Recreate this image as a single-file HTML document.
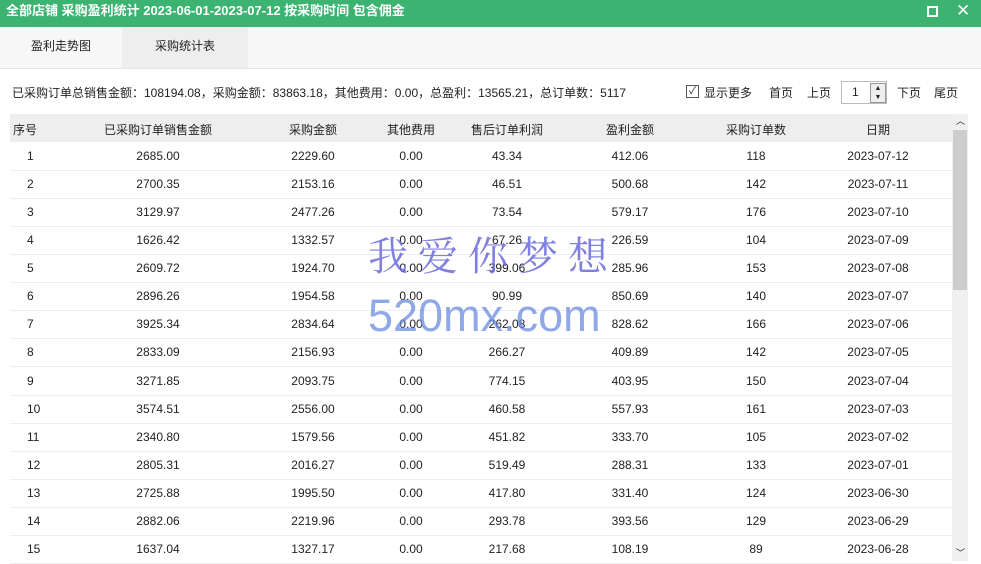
<!DOCTYPE html>
<html><head><meta charset="utf-8"><style>
body{margin:0;width:981px;height:561px;overflow:hidden;background:#fff;font-family:"Liberation Sans","Noto Sans CJK SC",sans-serif;font-size:12px;color:#222;position:relative}
.title{position:absolute;left:0;top:0;width:981px;height:27px;background:#3cb371;color:#fff;font-weight:bold;font-size:13px;line-height:22px}
.title span{position:absolute;left:6px;top:0}
.tabs{position:absolute;left:0;top:27px;width:981px;height:41px;background:#f7f7f7;border-bottom:1px solid #e4e4e4}
.tab{position:absolute;top:0;height:41px;line-height:39px;text-align:center;font-size:12px}
.sum{position:absolute;left:12px;top:84px;font-size:12px}
.ctl{position:absolute;top:84px;font-size:12px}
.hdr{position:absolute;left:10px;top:114px;width:942px;height:28px;background:#eee}
.c{position:absolute;text-align:center;width:120px;margin-left:-60px;white-space:nowrap}
.row{position:absolute;left:10px;width:942px;height:28px;border-bottom:1px solid #eee}
.sb{position:absolute;left:952px;top:114px;width:16px;height:447px;background:#f0f0f0}
</style></head><body>
<div class="title"><span>全部店铺 采购盈利统计 2023-06-01-2023-07-12 按采购时间 包含佣金</span>
<div style="position:absolute;left:927px;top:6px;width:7px;height:7px;border:2px solid #fff"></div>
<div style="position:absolute;left:956px;top:0;font-size:17px;font-weight:normal">✕</div></div>
<div class="tabs"><div class="tab" style="left:0;width:122px">盈利走势图</div><div class="tab" style="left:122px;width:126px;background:#eee">采购统计表</div></div>
<div class="sum">已采购订单总销售金额：108194.08，采购金额：83863.18，其他费用：0.00，总盈利：13565.21，总订单数：5117</div>
<div style="position:absolute;left:686px;top:85px;width:11px;height:11px;border:1px solid #555;font-size:10px;line-height:11px;text-align:center">✓</div>
<div class="ctl" style="left:704px">显示更多</div>
<div class="ctl" style="left:769px">首页</div>
<div class="ctl" style="left:807px">上页</div>
<div style="position:absolute;left:841px;top:81px;width:44px;height:21px;border:1px solid #bbb;background:#fff"><span style="position:absolute;left:10px;top:3px">1</span><div style="position:absolute;left:28px;top:1px;width:14px;height:18px;border:1px solid #999;background:#eee;font-size:7px;line-height:9px;text-align:center">▲<br>▼</div></div>
<div class="ctl" style="left:897px">下页</div>
<div class="ctl" style="left:934px">尾页</div>
<div class="hdr"></div>
<div id="t"></div>
<div class="sb"><div style="position:absolute;left:1px;top:16px;width:14px;height:160px;background:#cdcdcd"></div><div style="position:absolute;left:4px;top:0;font-size:9px">︿</div><div style="position:absolute;left:4px;top:432px;font-size:9px">﹀</div></div>
<div style="position:absolute;left:368px;top:225px;font-size:40px;font-family:'Noto Serif CJK SC',serif;color:#6a6adc;opacity:.85;letter-spacing:10px">我爱你梦想</div>
<div style="position:absolute;left:368px;top:290px;font-size:45px;color:#6a8be0;opacity:.75">520mx.com</div>
<script>
const cx=[13,158,313,411,507,630,756,878];
const H=["序号","已采购订单销售金额","采购金额","其他费用","售后订单利润","盈利金额","采购订单数","日期"];
const D=[["2685.00","2229.60","43.34","412.06","118","2023-07-12"],["2700.35","2153.16","46.51","500.68","142","2023-07-11"],["3129.97","2477.26","73.54","579.17","176","2023-07-10"],["1626.42","1332.57","67.26","226.59","104","2023-07-09"],["2609.72","1924.70","399.06","285.96","153","2023-07-08"],["2896.26","1954.58","90.99","850.69","140","2023-07-07"],["3925.34","2834.64","262.08","828.62","166","2023-07-06"],["2833.09","2156.93","266.27","409.89","142","2023-07-05"],["3271.85","2093.75","774.15","403.95","150","2023-07-04"],["3574.51","2556.00","460.58","557.93","161","2023-07-03"],["2340.80","1579.56","451.82","333.70","105","2023-07-02"],["2805.31","2016.27","519.49","288.31","133","2023-07-01"],["2725.88","1995.50","417.80","331.40","124","2023-06-30"],["2882.06","2219.96","293.78","393.56","129","2023-06-29"],["1637.04","1327.17","217.68","108.19","89","2023-06-28"]];
let h="";
H.forEach((t,i)=>{h+=i==0?`<div style="position:absolute;left:13px;top:121px">${t}</div>`:`<div class="c" style="left:${cx[i]}px;top:121px">${t}</div>`});
D.forEach((r,j)=>{const y=142+j*28.07;h+=`<div class="row" style="top:${y}px"></div>`;const v=[String(j+1),r[0],r[1],"0.00",r[2],r[3],r[4],r[5]];
v.forEach((t,i)=>{h+=i==0?`<div style="position:absolute;left:27px;top:${y+7}px">${t}</div>`:`<div class="c" style="left:${cx[i]}px;top:${y+7}px">${t}</div>`})});
document.getElementById("t").innerHTML=h;
</script>
</body></html>
